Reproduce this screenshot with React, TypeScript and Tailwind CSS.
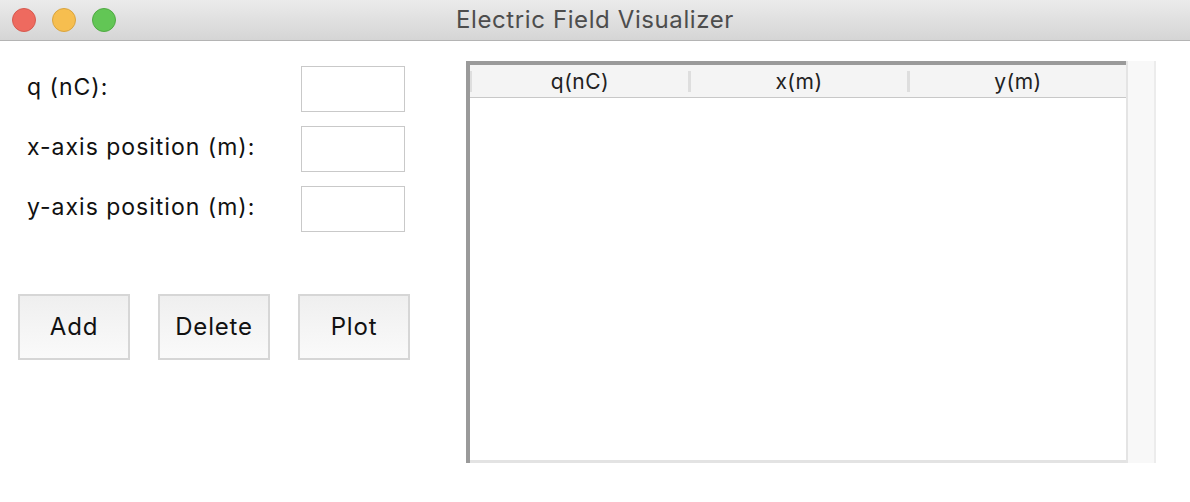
import { useState } from 'react';

const font = { fontFamily: 'Inter, "Noto Sans", "Liberation Sans", sans-serif' };

export default function App() {
  const [q, setQ] = useState('');
  const [x, setX] = useState('');
  const [y, setY] = useState('');
  const [charges, setCharges] = useState<{ q: string; x: string; y: string }[]>([]);

  const fields = [
    { label: 'q (nC):', value: q, set: setQ },
    { label: 'x-axis position (m):', value: x, set: setX },
    { label: 'y-axis position (m):', value: y, set: setY },
  ];

  const handleAdd = () => {
    if (!q || !x || !y) return;
    setCharges(prev => [...prev, { q, x, y }]);
    setQ('');
    setX('');
    setY('');
  };

  const handleDelete = () => setCharges(prev => prev.slice(0, -1));

  return (
    <div className="w-[1190px] h-[502px] bg-white overflow-hidden" style={font}>
      {/* Title bar */}
      <div className="relative h-[41px] flex items-center bg-gradient-to-b from-[#ebebeb] to-[#d5d5d5] border-b border-[#b4b4b4]">
        <div className="flex gap-4 pl-3">
          <div className="w-6 h-6 rounded-full bg-[#ee6a5f] border border-[#d65a4f]" />
          <div className="w-6 h-6 rounded-full bg-[#f6be4f] border border-[#d9a43f]" />
          <div className="w-6 h-6 rounded-full bg-[#62c655] border border-[#50aa43]" />
        </div>
        <div className="absolute inset-0 flex items-center justify-center text-[24px] tracking-[0.6px] text-[#4d4d4d] pointer-events-none">
          Electric Field Visualizer
        </div>
      </div>

      <div className="flex">
        {/* Left: inputs and buttons */}
        <div className="w-[466px] pt-[25px]">
          <div className="flex flex-col gap-[14px] pl-[27px]">
            {fields.map(f => (
              <div key={f.label} className="flex items-center h-[46px]">
                <span className="w-[274px] text-[23px] tracking-[1px] text-[#111] -mt-[3px]">{f.label}</span>
                <input
                  value={f.value}
                  onChange={e => f.set(e.target.value)}
                  className="w-[104px] h-[46px] border border-[#c9c9c9] bg-white outline-none px-2 text-[18px]"
                />
              </div>
            ))}
          </div>
          <div className="flex gap-[28px] pl-[18px] mt-[62px]">
            {[
              { label: 'Add', onClick: handleAdd },
              { label: 'Delete', onClick: handleDelete },
              { label: 'Plot', onClick: () => {} },
            ].map(b => (
              <button
                key={b.label}
                onClick={b.onClick}
                className="w-[112px] h-[66px] border-2 border-[#d6d6d6] bg-gradient-to-b from-[#efefef] to-[#fafafa] text-[24px] tracking-[0.8px] text-[#111]"
              >
                {b.label}
              </button>
            ))}
          </div>
        </div>

        {/* Right: table */}
        <div className="pt-[20px] flex">
          <div className="w-[660px] h-[402px] flex flex-col border-l-4 border-t-4 border-[#9a9a9a] bg-white">
            <div className="h-[33px] flex items-center bg-[#f4f4f4] border-b border-[#c8c8c8] text-[21px] tracking-[0.5px] text-[#222]">
              <div className="w-[2px] h-[21px] bg-[#dedede]" />
              <div className="flex-1 text-center pt-[2px]">q(nC)</div>
              <div className="w-[3px] h-[21px] bg-[#dedede]" />
              <div className="flex-1 text-center pt-[2px]">x(m)</div>
              <div className="w-[3px] h-[21px] bg-[#dedede]" />
              <div className="flex-1 text-center pt-[2px]">y(m)</div>
            </div>
            <div className="flex-1 flex flex-col text-[18px] text-[#222]">
              {charges.map((c, i) => (
                <div key={i} className="flex h-[30px] items-center">
                  <div className="flex-1 text-center">{c.q}</div>
                  <div className="flex-1 text-center">{c.x}</div>
                  <div className="flex-1 text-center">{c.y}</div>
                </div>
              ))}
            </div>
            <div className="h-[3px] bg-[#e3e3e3]" />
          </div>
          <div className="w-[30px] h-[402px] bg-[#f8f8f8] border-l-2 border-r-2 border-l-[#e4e4e4] border-r-[#ececec]" />
        </div>
      </div>
    </div>
  );
}
